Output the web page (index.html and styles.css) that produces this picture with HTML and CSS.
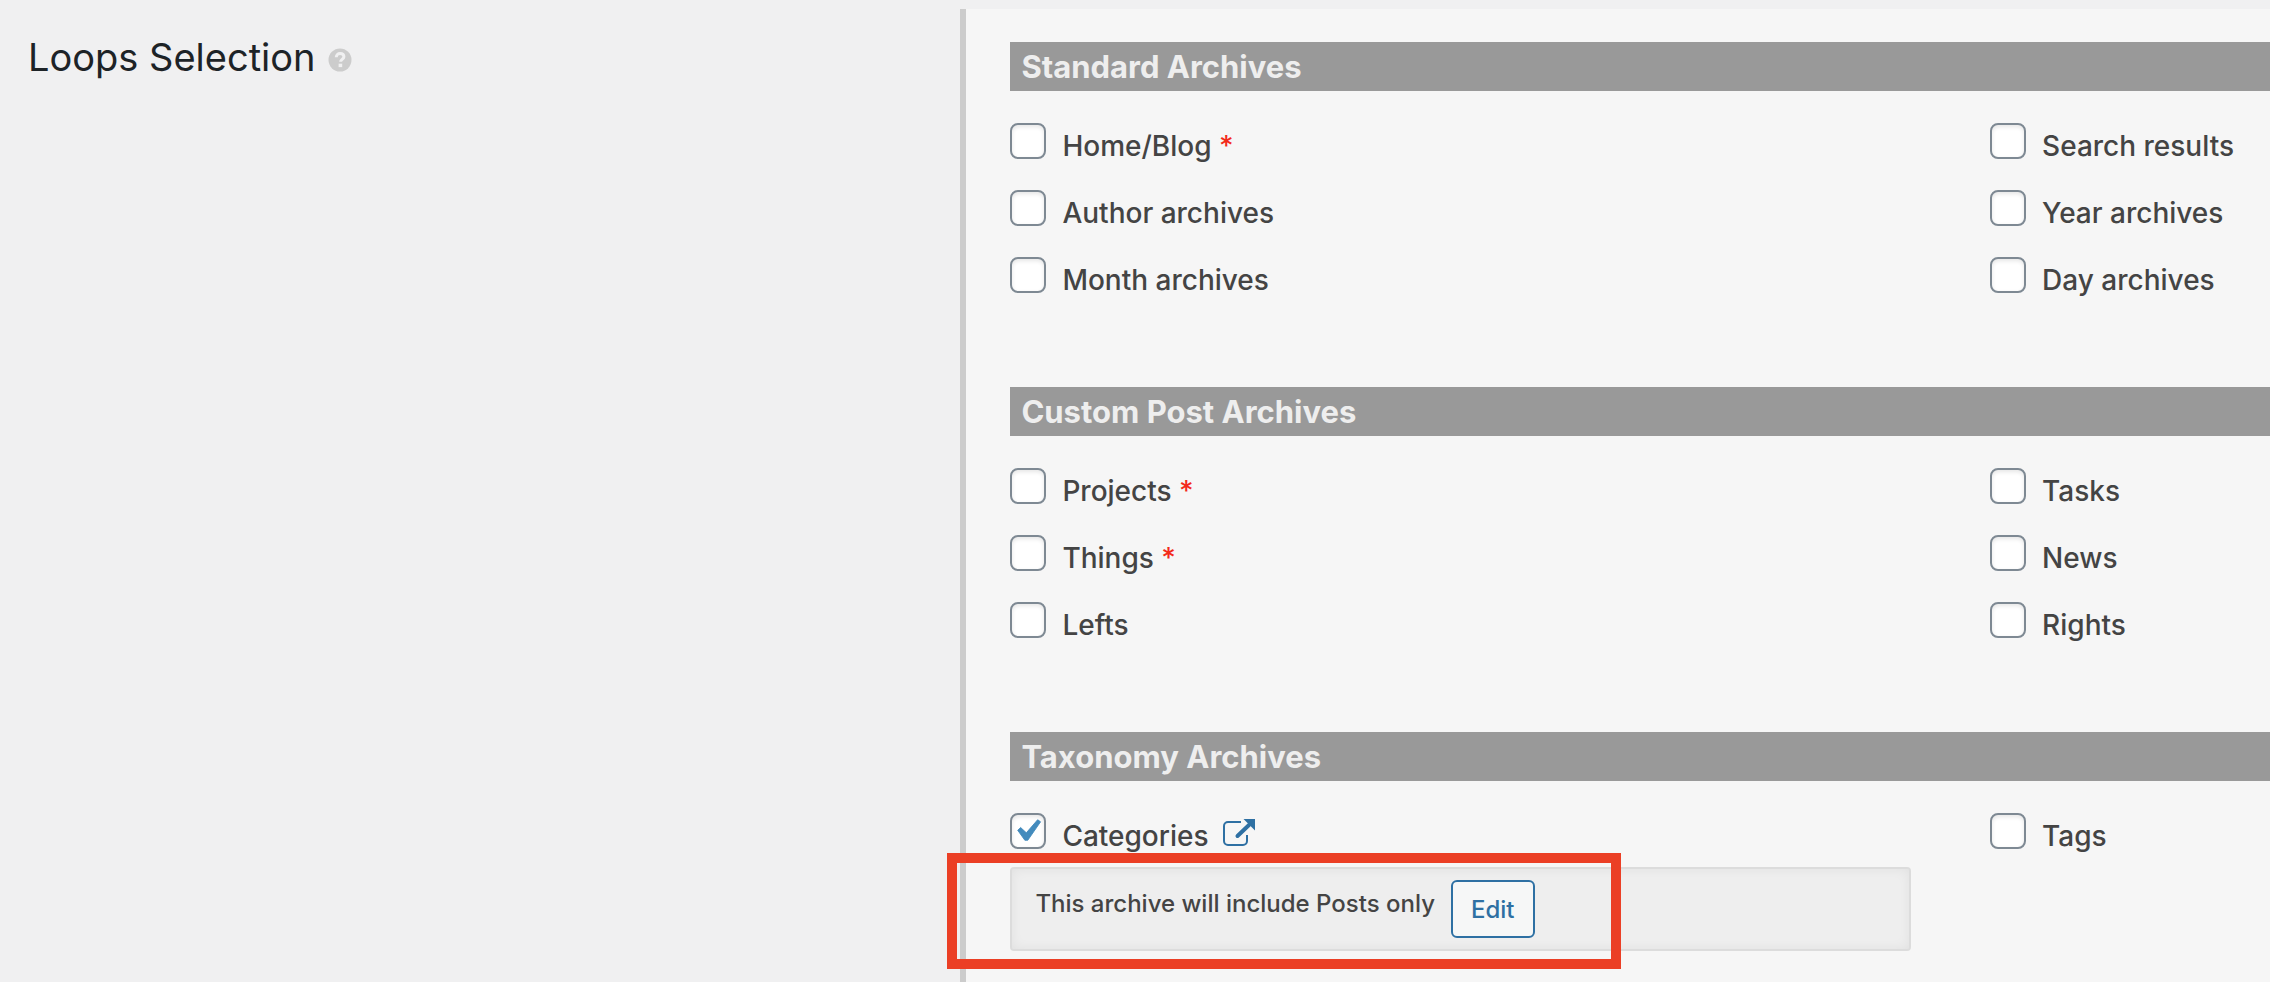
FILE: index.html
```html
<!DOCTYPE html>
<html lang="en">
<head>
  <meta charset="UTF-8" />
  <meta name="viewport" content="width=device-width, initial-scale=1.0"/>
  <title>Loops Selection</title>
  <link rel="stylesheet" href="styles.css">
</head>
<body>

  <div class="option">
    <div class="option-title">
      <h1>Loops Selection</h1>
      <a href="#help" class="help" aria-label="Help">
        <svg viewBox="0 0 24 24" width="24" height="24">
          <circle cx="12" cy="12" r="11.5" fill="#ccc"/>
          <path d="M8.3 9.2C8.3 6.8 9.9 5.6 12.1 5.6s3.8 1.2 3.8 3.2c0 2.4-3.3 2.800-3.300 5" fill="none" stroke="#f0f0f1" stroke-width="3"/>
          <rect x="10.6" y="15.7" width="3.6" height="3.4" fill="#f0f0f1"/>
        </svg>
      </a>
    </div>

    <div class="option-field">
      <section class="loops">
        <h2>Standard Archives</h2>
        <ul>
          <li><label><input type="checkbox"><span>Home/Blog <span class="star">*</span></span></label></li>
          <li><label><input type="checkbox"><span>Search results</span></label></li>
          <li><label><input type="checkbox"><span>Author archives</span></label></li>
          <li><label><input type="checkbox"><span>Year archives</span></label></li>
          <li><label><input type="checkbox"><span>Month archives</span></label></li>
          <li><label><input type="checkbox"><span>Day archives</span></label></li>
        </ul>
      </section>

      <section class="loops">
        <h2>Custom Post Archives</h2>
        <ul>
          <li><label><input type="checkbox"><span>Projects <span class="star">*</span></span></label></li>
          <li><label><input type="checkbox"><span>Tasks</span></label></li>
          <li><label><input type="checkbox"><span>Things <span class="star">*</span></span></label></li>
          <li><label><input type="checkbox"><span>News</span></label></li>
          <li><label><input type="checkbox"><span>Lefts</span></label></li>
          <li><label><input type="checkbox"><span>Rights</span></label></li>
        </ul>
      </section>

      <section class="loops">
        <h2>Taxonomy Archives</h2>
        <ul>
          <li>
            <div class="row">
              <label><input type="checkbox" checked><span>Categories</span></label>
              <a href="#categories" class="external" aria-label="Open Categories">
                <svg viewBox="0 0 32 28" width="32" height="28">
                  <path d="M18 3H5A4 4 0 0 0 1 7v15a4 4 0 0 0 4 4h15a4 4 0 0 0 4-4V16" fill="none" stroke="#2e70a3" stroke-width="2"/>
                  <path d="M14.500 17L26 6" fill="none" stroke="#2e70a3" stroke-width="4" stroke-linecap="round"/>
                  <path d="M20.500 0H32v11.500z" fill="#2e70a3"/>
                </svg>
              </a>
            </div>
            <div class="note">
              <span>This archive will include Posts only</span>
              <button type="button">Edit</button>
              <div class="highlight"></div>
            </div>
          </li>
          <li><label><input type="checkbox"><span>Tags</span></label></li>
        </ul>
      </section>
    </div>
  </div>

</body>
</html>
```
FILE: styles.css
```css
* {
  box-sizing: border-box;
}

body {
  margin: 0;
  background: #f0f0f1;
  color: #444;
  font-family: Inter, "Liberation Sans", sans-serif;
  font-size: 28px;
  font-weight: 500;
}

.option {
  display: grid;
  grid-template-columns: 11fr 15fr;
  min-height: 100vh;
  padding-top: 9px;
}

.option-title {
  display: flex;
  align-items: flex-start;
  gap: 12px;
  padding: 24px 28px;
}

h1 {
  margin: 0;
  color: #1d2327;
  font-size: 38px;
  font-weight: 400;
  line-height: 48px;
}

.help {
  display: flex;
  padding-top: 15px;
}

.option-field {
  padding: 33px 0 0 44px;
  border-left: 6px solid #ccc;
  background: #f6f6f6;
}

h2 {
  margin: 0 0 32px;
  padding: 1px 11px 0;
  background: #999;
  color: #eee;
  font-size: 31px;
  font-weight: 700;
  line-height: 48px;
}

ul {
  display: grid;
  grid-template-columns: 7fr 2fr;
  margin: 0 0 63px;
  padding: 0;
  list-style: none;
}

.loops:last-child ul {
  margin-bottom: 0;
}

li {
  min-width: 0;
  min-height: 67px;
  line-height: 46px;
}

label {
  display: flex;
  gap: 16px;
  white-space: nowrap;
}

input {
  appearance: none;
  flex: none;
  width: 36px;
  height: 36px;
  margin: 0;
  border: 2px solid #7e8993;
  border-radius: 8px;
  background: #fff;
  box-shadow: inset 0 2px 4px rgba(0, 0, 0, 0.1);
}

input:checked {
  background: #fff url("data:image/svg+xml,%3Csvg xmlns='http://www.w3.org/2000/svg' viewBox='0 0 20 20'%3E%3Cpath d='M14.830 4.890l1.340.940-5.810 8.380H9.020L5.780 9.670l1.340-1.250 2.570 2.400z' fill='%23438bbd' stroke='%23438bbd' stroke-width='.4' stroke-linejoin='round'/%3E%3C/svg%3E") -7px -6px / 44px 44px no-repeat;
}

.star {
  color: #f32a1a;
}

.row {
  display: flex;
  gap: 14px;
}

.external {
  display: flex;
  padding-top: 6px;
}

.note {
  position: relative;
  display: flex;
  align-items: flex-start;
  gap: 16px;
  margin: 8px 79px 0 0;
  padding: 11px 23px;
  border: 2px solid #dcdcdc;
  border-radius: 4px;
  background: #eee;
  box-shadow: inset 0 0 12px rgba(0, 0, 0, 0.06);
  font-size: 24px;
  line-height: 48px;
  white-space: nowrap;
}

button {
  height: 58px;
  padding: 0 18px;
  border: 2px solid #2e70a3;
  border-radius: 6px;
  background: #f6f7f7;
  color: #2e70a3;
  font-family: inherit;
  font-size: 24px;
  font-weight: 500;
  cursor: pointer;
}

.highlight {
  position: absolute;
  top: -16px;
  left: -65px;
  width: 674px;
  height: 116px;
  border: 10px solid #eb3f25;
  pointer-events: none;
}
```
